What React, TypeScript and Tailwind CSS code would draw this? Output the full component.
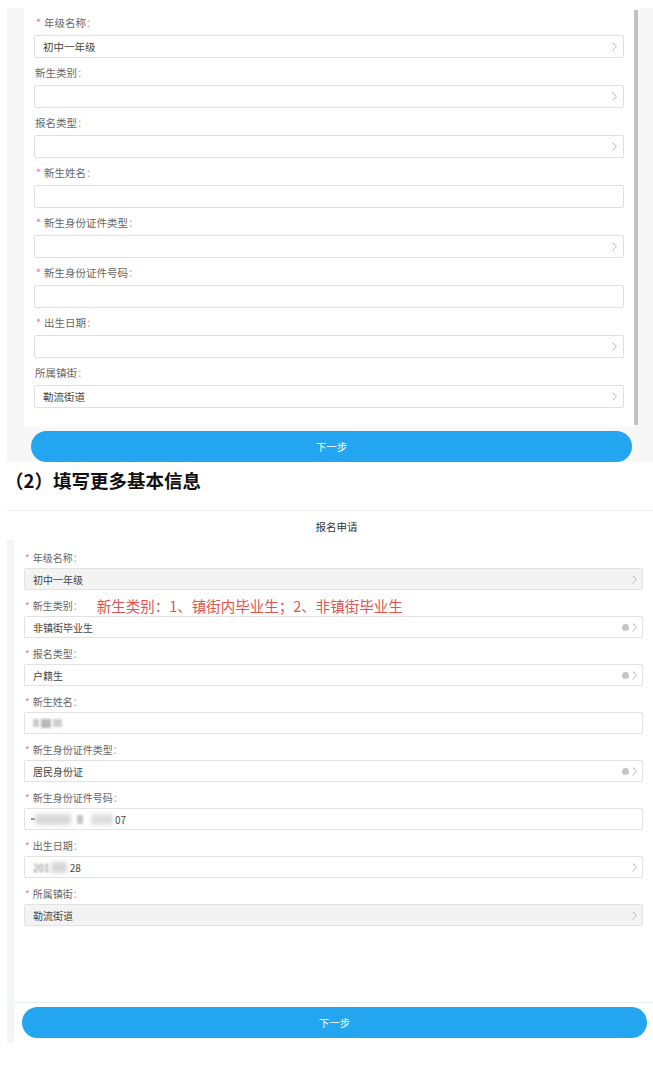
import React from "react";

interface Field {
  label: string;
  req: boolean;
  value?: React.ReactNode;
  arrow?: boolean;
  clear?: boolean;
  disabled?: boolean;
}

const topFields: Field[] = [
  { label: "年级名称", req: true, value: "初中一年级", arrow: true },
  { label: "新生类别", req: false, arrow: true },
  { label: "报名类型", req: false, arrow: true },
  { label: "新生姓名", req: true },
  { label: "新生身份证件类型", req: true, arrow: true },
  { label: "新生身份证件号码", req: true },
  { label: "出生日期", req: true, arrow: true },
  { label: "所属镇街", req: false, value: "勒流街道", arrow: true },
];

function Chevron() {
  return (
    <svg width="5" height="9" viewBox="0 0 5 9" fill="none">
      <path d="M0.6 0.6 L4.3 4.5 L0.6 8.4" stroke="#ababab" strokeWidth="0.9" />
    </svg>
  );
}

function ClearDot() {
  return <span className="w-[7px] h-[7px] rounded-full bg-[#c6c6c6]" />;
}

// blurred private values
const nameBlur = (
  <span className="flex items-center gap-[2px]">
    <span className="w-[6px] h-[8px] bg-[#c9c9c9] blur-[1px]" />
    <span className="w-[10px] h-[9px] bg-[#b9b9b9] blur-[1px]" />
    <span className="w-[9px] h-[8px] bg-[#cfcfcf] blur-[1px]" />
  </span>
);

const idBlur = (
  <span className="flex items-center">
    <span className="w-[4px] h-[2px] bg-[#888] blur-[0.5px] -ml-[2px]" />
    <span className="w-[36px] h-[11px] bg-[#d9d9d9] blur-[2px]" />
    <span className="w-[6px] h-[9px] bg-[#c4c4c4] blur-[1px] ml-[6px]" />
    <span className="w-[22px] h-[11px] bg-[#dedede] blur-[2px] ml-[8px]" />
    <span className="ml-[2px]">07</span>
  </span>
);

const dateBlur = (
  <span className="flex items-center">
    <span className="text-[#777] blur-[0.8px]">201</span>
    <span className="w-[16px] h-[11px] bg-[#d6d6d6] blur-[2px] ml-[1px]" />
    <span className="ml-[3px]">28</span>
  </span>
);

const bottomFields: Field[] = [
  { label: "年级名称", req: true, value: "初中一年级", arrow: true, disabled: true },
  { label: "新生类别", req: true, value: "非镇街毕业生", arrow: true, clear: true },
  { label: "报名类型", req: true, value: "户籍生", arrow: true, clear: true },
  { label: "新生姓名", req: true, value: nameBlur },
  { label: "新生身份证件类型", req: true, value: "居民身份证", arrow: true, clear: true },
  { label: "新生身份证件号码", req: true, value: idBlur },
  { label: "出生日期", req: true, value: dateBlur, arrow: true },
  { label: "所属镇街", req: true, value: "勒流街道", arrow: true, disabled: true },
];

function TopField({ f }: { f: Field }) {
  return (
    <div className="flex flex-col mb-[3px]">
      <div className="h-[24px] flex items-center text-[10.5px] text-[#666]">
        {f.req ? (
          <span className="text-[#f07070] ml-[2px] mr-[3px]">*</span>
        ) : (
          <span className="ml-[1px]" />
        )}
        {f.label}
        <span className="text-[#aaa]">：</span>
      </div>
      <div className="h-[23px] border border-[#e0e0e0] rounded-[2px] bg-white flex items-center pl-[8px] pr-[6px] text-[10.5px] text-[#444]">
        <span className="flex-1">{f.value}</span>
        {f.arrow && <Chevron />}
      </div>
    </div>
  );
}

function BottomField({ f, note }: { f: Field; note?: string }) {
  return (
    <div className="flex flex-col mb-[5px]">
      <div className="h-[21px] flex items-center text-[10px] text-[#666]">
        <span className="text-[#f07a7a] ml-[1px] mr-[3px]">*</span>
        {f.label}
        <span className="text-[#aaa]">：</span>
        {note && <span className="ml-[14px] text-[14.5px] text-[#e4524f]">{note}</span>}
      </div>
      <div
        className={
          "h-[22px] border border-[#e2e2e2] rounded-[2px] flex items-center pl-[8px] pr-[5px] text-[10px] text-[#444] " +
          (f.disabled ? "bg-[#f3f3f3]" : "bg-white")
        }
      >
        <span className="flex-1 flex items-center">{f.value}</span>
        <span className="flex items-center gap-[3px]">
          {f.clear && <ClearDot />}
          {f.arrow && <Chevron />}
        </span>
      </div>
    </div>
  );
}

export default function App() {
  return (
    <div className="w-[653px] h-[1076px] bg-white overflow-hidden font-['Noto_Sans_CJK_SC','Liberation_Sans',sans-serif]">
      {/* (1) screenshot */}
      <div className="mt-[8px] ml-[7px] h-[454px] bg-[#f7f7f8] flex">
        <div className="w-[17px]" />
        <div className="flex-1 flex flex-col">
          <div className="h-[419px] flex">
            <div className="flex-1 bg-white px-[10px] pt-[3px]">
              {topFields.map((f) => (
                <TopField key={f.label} f={f} />
              ))}
            </div>
            <div className="w-[19px] pt-[2px] pb-[2px]">
              <div className="w-[4px] h-full bg-[#c2c2c2] rounded-[1px]" />
            </div>
          </div>
          <button className="ml-[7px] mt-[4px] w-[601px] h-[31px] rounded-full bg-[#23a6ef] text-white text-[10.5px]">
            下一步
          </button>
        </div>
      </div>

      <div className="mt-[6px] h-[26px] pl-[5px] flex items-center text-[18.5px] font-bold text-[#111]">
        （2）填写更多基本信息
      </div>

      {/* (2) screenshot */}
      <div className="mt-[16px] ml-[7px] border-t border-[#ececec]">
        <div className="h-[29px] pt-[9px] text-center text-[10.5px] leading-[14px] text-[#333] pl-[13px]">
          报名申请
        </div>
        <div className="flex">
          <div className="w-[7px] bg-[#f4f5f7]" />
          <div className="flex-1 flex flex-col">
            <div className="h-[463px] bg-white px-[10px] pt-[7px] border-b border-[#e6eff5]">
              {bottomFields.map((f, i) => (
                <BottomField
                  key={f.label}
                  f={f}
                  note={i === 1 ? "新生类别：1、镇街内毕业生；2、非镇街毕业生" : undefined}
                />
              ))}
            </div>
            <div className="h-[40px] pl-[8px] pt-[4px]">
              <button className="w-[625px] h-[31px] rounded-full bg-[#23a6ef] text-white text-[10.5px]">
                下一步
              </button>
            </div>
          </div>
        </div>
      </div>
    </div>
  );
}
